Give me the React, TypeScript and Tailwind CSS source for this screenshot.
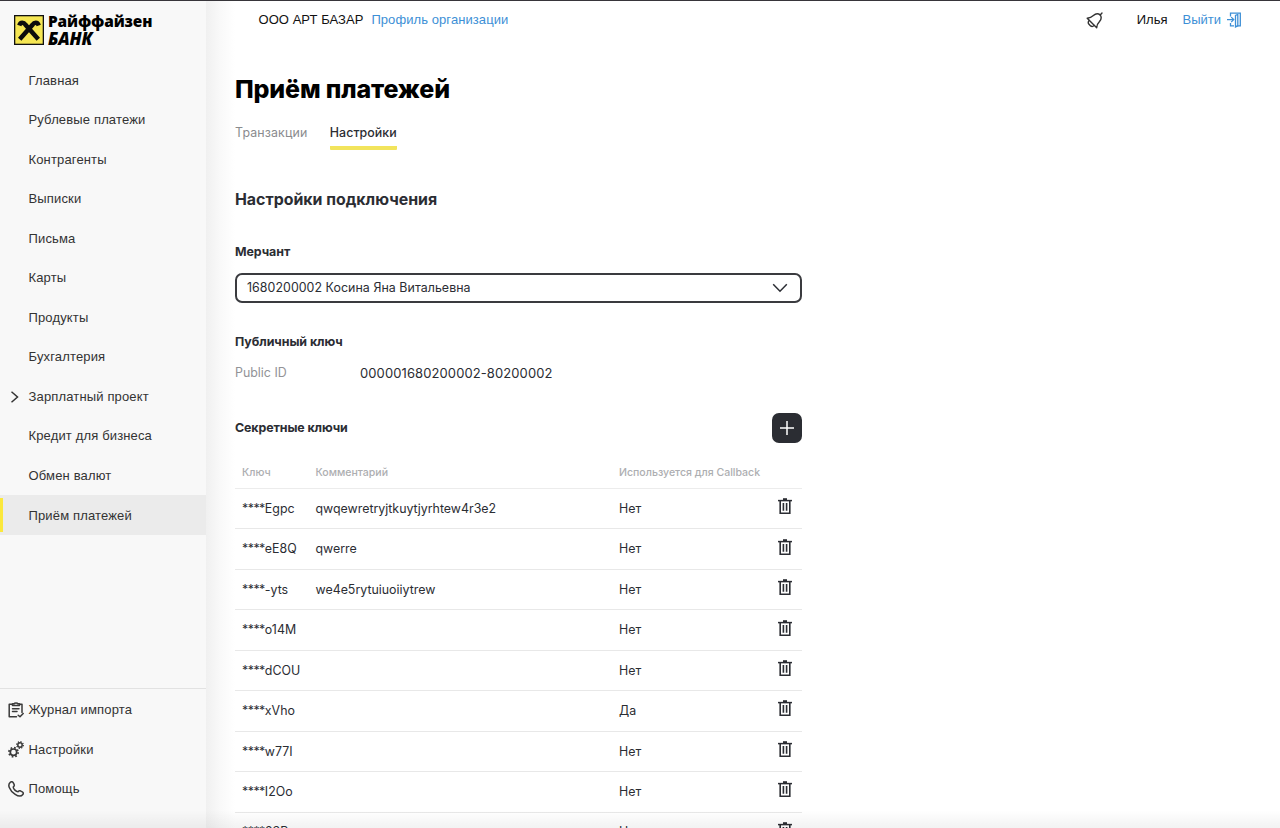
import React from "react";

const nav = [
  "Главная",
  "Рублевые платежи",
  "Контрагенты",
  "Выписки",
  "Письма",
  "Карты",
  "Продукты",
  "Бухгалтерия",
  "Зарплатный проект",
  "Кредит для бизнеса",
  "Обмен валют",
  "Приём платежей",
];

const keys = [
  { id: "Egpc", comment: "qwqewretryjtkuytjyrhtew4r3e2", callback: "Нет" },
  { id: "eE8Q", comment: "qwerre", callback: "Нет" },
  { id: "-yts", comment: "we4e5rytuiuoiiytrew", callback: "Нет" },
  { id: "o14M", comment: "", callback: "Нет" },
  { id: "dCOU", comment: "", callback: "Нет" },
  { id: "xVho", comment: "", callback: "Да" },
  { id: "w77I", comment: "", callback: "Нет" },
  { id: "I2Oo", comment: "", callback: "Нет" },
  { id: "63B", comment: "", callback: "Нет" },
];

function LogoMark() {
  return (
    <svg width="30" height="30" viewBox="0 0 30 30" className="shrink-0">
      <rect x="0.6" y="0.6" width="28.8" height="28.8" fill="#f5e653" stroke="#111" strokeWidth="1.4" />
      <g fill="none" stroke="#0c0c0c" strokeWidth="4.500">
        <path d="M24.300 24.300 11.500 9.800C9.800 7.300 6.500 6.800 5.300 10.500" />
        <path d="M5.700 24.300 18.500 9.800C20.200 7.300 23.500 6.800 24.700 10.500" />
      </g>
    </svg>
  );
}

function Trash() {
  return (
    <svg width="14" height="16" viewBox="0 0 14 16" fill="none" stroke="#2b2d33" className="block">
      <path d="M0 2.600H14" strokeWidth="1.500" />
      <path d="M5 1.200H9" strokeWidth="2" />
      <path d="M2.200 3V15.200H11.800V3" strokeWidth="1.600" />
      <path d="M5.400 5V12.800M8.600 5V12.800" strokeWidth="1.600" />
    </svg>
  );
}

function Bell() {
  return (
    <svg width="17" height="17" viewBox="0 0 17 17" fill="none" stroke="#333" strokeWidth="1.400" strokeLinecap="round" strokeLinejoin="round">
      <path d="M1.200 6.200 10.700 15.700C11 12.500 12 11 13.500 9.500C15.600 7.200 15.400 4.700 14.200 2.900C12.300 1.400 9.500 1.500 7.400 3.500C5.900 4.900 4.400 5.900 1.200 6.200Z" />
      <path d="M14.200 2.900 16 1M3.300 8.500C1.900 9.600 2 11 2.800 12L4.600 13.900C5.700 14.800 7.200 14.500 8.200 13.400" />
    </svg>
  );
}

function Exit() {
  return (
    <svg width="15" height="16" viewBox="0 0 15 16" fill="none" stroke="#3d8fd6" strokeWidth="1.300">
      <path d="M3.500 4.500V1.200H13.300V13.800H9.500M3.500 11V13.800H7" />
      <path d="M8.500 3.500V15L10.800 13.800V2.500Z" />
      <path d="M0 7.600H6.500M4.200 5.100 6.700 7.600 4.200 10.100" />
    </svg>
  );
}

function ImportLog() {
  return (
    <svg width="16" height="16" viewBox="0 0 16 16" fill="none" stroke="#3a3a3a" strokeWidth="1.500" strokeLinecap="round" strokeLinejoin="round">
      <path d="M4 2.200H1.200V14.800H8.500M12 2.200H14V10.500" />
      <path d="M4.500 3.500V1.800H6.200C6.500 0.600 9.500 0.600 9.800 1.800H11.500V3.500Z" />
      <path d="M4.500 6.700H11M4.500 9.500H9M10.200 13.200 12 14.800 15.200 11.500" />
    </svg>
  );
}

function Gears() {
  return (
    <svg width="16" height="17" viewBox="0 0 16 17" fill="none" stroke="#3a3a3a">
      <circle cx="5.500" cy="11.200" r="3.200" strokeWidth="1.700" />
      <circle cx="5.500" cy="11.200" r="4.600" strokeWidth="1.700" strokeDasharray="1.700 1.913" />
      <circle cx="12" cy="4" r="2.200" strokeWidth="1.500" />
      <circle cx="12" cy="4" r="3.300" strokeWidth="1.300" strokeDasharray="1.200 1.392" />
    </svg>
  );
}

function Phone() {
  return (
    <svg width="16" height="16" viewBox="0 0 16 16" fill="none" stroke="#3a3a3a" strokeWidth="1.500" strokeLinejoin="round">
      <path d="M2.500 1.200C3.500 0.300 4.700 0.600 5.200 1.700L6.200 3.700C6.600 4.600 6.200 5.200 5.200 6C5.300 8 8 10.700 10 10.700C10.800 9.800 11.400 9.400 12.300 9.800L14.300 10.800C15.400 11.400 15.600 12.500 14.800 13.500C13.500 15.200 10.700 15.600 7.200 13.300C4.500 11.600 2.300 9.200 1.300 6.500C0.400 4.200 1 2.300 2.500 1.200Z" />
    </svg>
  );
}

const sideLinks = [
  { label: "Журнал импорта", icon: <ImportLog /> },
  { label: "Настройки", icon: <Gears /> },
  { label: "Помощь", icon: <Phone /> },
];

export default function App() {
  return (
    <div className="relative flex h-[828px] w-[1280px] overflow-hidden border-t border-[#37353a] bg-white font-['Inter','Liberation_Sans',sans-serif] text-[12.4px] text-[#2b2d33]">
      <aside className="flex w-[205.500px] shrink-0 flex-col bg-[#f8f8f8] font-['Liberation_Sans',sans-serif] text-[13px] tracking-[0.15px] text-[#333]">
        <div className="flex h-[59px] shrink-0 gap-[4.500px] pt-[14px] pl-[13.500px]">
          <LogoMark />
          <div className="-mt-[1px] font-['Open_Sans',sans-serif] text-[15.400px] leading-[16.500px] font-extrabold tracking-[-0.150px] text-black">
            <div>Райффайзен</div>
            <div className="text-[17px] italic">БАНК</div>
          </div>
        </div>
        <nav className="flex flex-col">
          {nav.map((label, i) => (
            <a
              key={label}
              className={
                i === 11
                  ? "flex h-[39.550px] items-center bg-[#ebebeb]"
                  : "flex h-[39.550px] items-center pt-[1px] pl-[28.5px]"
              }
            >
              {i === 8 && (
                <svg width="9" height="12" viewBox="0 0 9 12" fill="none" stroke="#333" strokeWidth="1.500" className="-ml-[18.500px] mr-[9.500px]">
                  <path d="M1.500 0.800 7.500 6 1.500 11.200" />
                </svg>
              )}
              {i === 11 && <span className="mr-[25.5px] h-[34px] w-[3px] bg-[#fbe83c]" />}
              <span className={i === 11 ? "pt-[2px]" : ""}>{label}</span>
            </a>
          ))}
        </nav>
        <div className="mt-auto mb-[19px] border-t border-[#e2e2e2]">
          {sideLinks.map((l) => (
            <a key={l.label} className="flex h-[39.6px] items-center pl-2 first:mt-[1px]">
              <span className="flex w-[20.5px]">{l.icon}</span>
              {l.label}
            </a>
          ))}
        </div>
      </aside>
      <div className="w-[29.500px] shrink-0 bg-linear-to-r from-[#f0f0f0] via-[#f9f9f9] to-white" />

      <main className="flex min-w-0 flex-1 flex-col">
        <header className="flex h-[38px] shrink-0 items-center pr-[38px] pl-[23.500px] font-['Liberation_Sans',sans-serif] text-[13px] text-[#111]">
          <span className="tracking-[0.050px]">ООО АРТ БАЗАР</span>
          <a className="ml-2 tracking-[0.080px] text-[#3d8fd6]">Профиль организации</a>
          <span className="ml-auto"><Bell /></span>
          <span className="ml-[34px]">Илья</span>
          <a className="ml-[15px] flex items-center gap-[6px] text-[#3d8fd6]">Выйти <Exit /></a>
        </header>

        <h1 className="mt-[31px] h-[39px] shrink-0 text-[25px] leading-[38px] font-extrabold tracking-[-0.150px] whitespace-nowrap text-black">Приём платежей</h1>
        <div className="mt-[14px] flex h-[27px] shrink-0 gap-[22.500px] leading-[20px]">
          <span className="tracking-[0.120px] text-[#8a8b8e]">Транзакции</span>
          <span className="rounded-b-[1px] border-b-[4px] border-[#f2e45c] font-medium tracking-[0.050px]">Настройки</span>
        </div>
        <h2 className="mt-[38px] h-[24px] shrink-0 text-[15.900px] leading-[24px] font-bold">Настройки подключения</h2>

        <section className="flex w-[566.500px] shrink-0 flex-col">
          <h3 className="mt-[30px] h-[20px] leading-[20px] font-bold tracking-[-0.050px]">Мерчант</h3>
          <div className="mt-[11px] flex h-[30px] items-center justify-between rounded-[7px] border-2 border-[#3a3b3f] pr-[11.500px] pl-[10px]">
            <span className="tracking-[0.050px]">1680200002 Косина Яна Витальевна</span>
            <svg width="16" height="10" viewBox="0 0 16 10" fill="none" stroke="#2b2d33" strokeWidth="1.500">
              <path d="M1.200 1.200 8 8.200 14.800 1.200" />
            </svg>
          </div>
          <h3 className="mt-[29px] h-[20px] leading-[20px] font-bold tracking-[-0.050px]">Публичный ключ</h3>
          <div className="mt-[11px] flex h-[20px] leading-[20px]">
            <span className="w-[125px] text-[#929397]">Public ID</span>
            <span className="text-[13px] tracking-[0.100px]">000001680200002-80200002</span>
          </div>
          <div className="mt-[30px] flex h-[30px] items-center justify-between">
            <h3 className="font-bold tracking-[-0.100px]">Секретные ключи</h3>
            <button className="flex size-[30px] items-center justify-center rounded-[7px] bg-[#2b2d33]">
              <svg width="14" height="14" viewBox="0 0 14 14" stroke="#fff" strokeWidth="1.500">
                <path d="M7 0V14M0 7H14" />
              </svg>
            </button>
          </div>
          <div className="mt-[14px] flex h-[32px] items-center border-b border-[#ececec] pl-[7px] text-[10.550px] font-medium text-[#adaeb1]">
            <span className="w-[73.500px]">Ключ</span>
            <span className="w-[303.500px]">Комментарий</span>
            <span>Используется для Callback</span>
          </div>
          {keys.map((k) => (
            <div key={k.id} className="flex h-[40.450px] shrink-0 items-center border-b border-[#e8e8e8] pt-px pl-[7px]">
              <span className="w-[73.500px]"><span className="tracking-[-0.500px]">****</span>{k.id}</span>
              <span className="w-[303.500px]">{k.comment}</span>
              <span className="flex-1">{k.callback}</span>
              <span className="mr-[9.500px] -mt-[6px]"><Trash /></span>
            </div>
          ))}
        </section>
      </main>
      <div className="pointer-events-none absolute inset-x-0 bottom-0 h-[18px] bg-linear-to-b from-transparent to-black/5" />
    </div>
  );
}
